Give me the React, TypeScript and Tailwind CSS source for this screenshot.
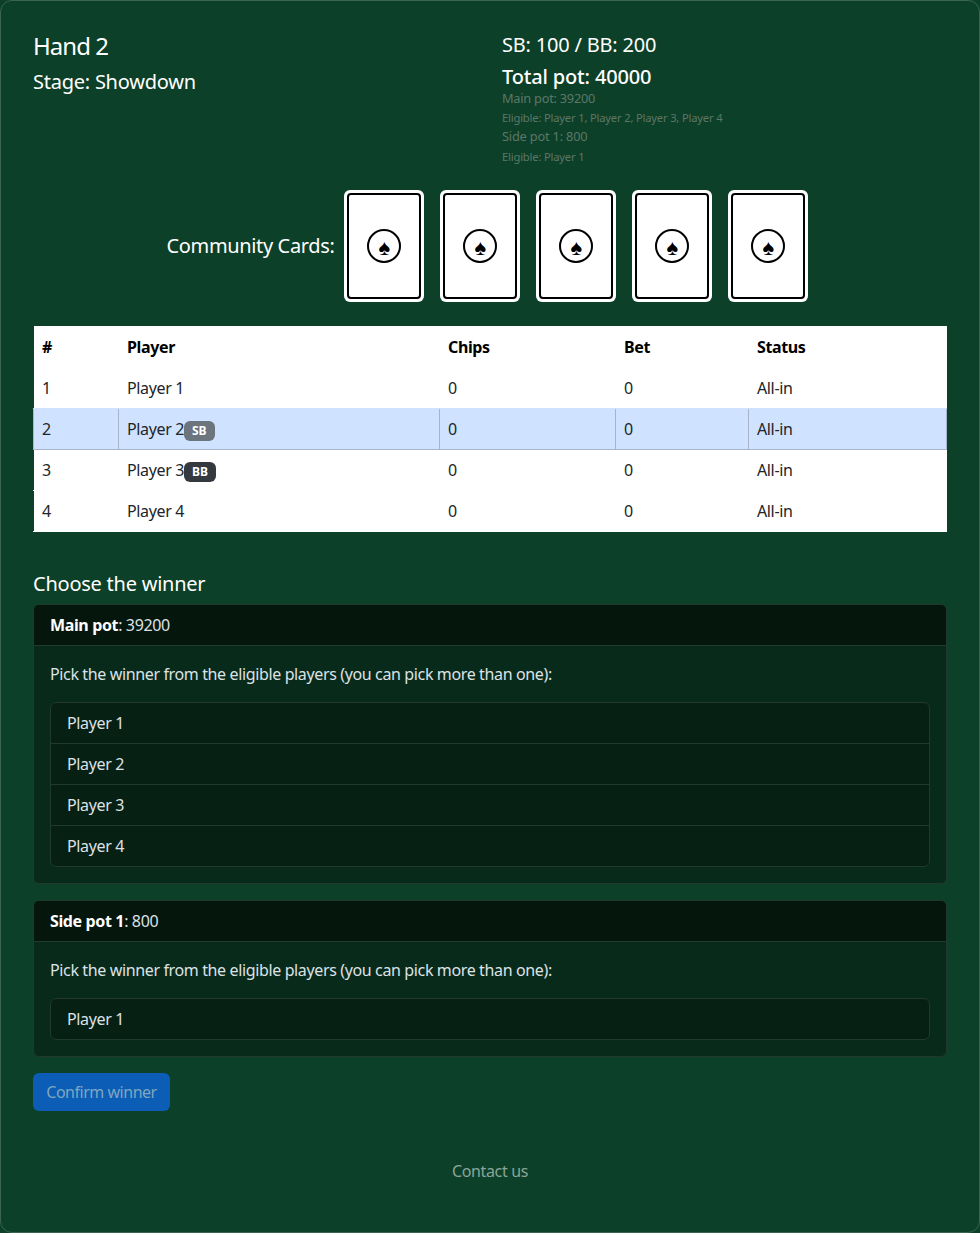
import React from "react";

function Card() {
  return (
    <div className="w-[80px] h-[112px] bg-white rounded-[6px] p-[3px] shrink-0">
      <div className="w-full h-full border-2 border-black rounded-[4px] flex items-center justify-center">
        <div className="w-[34px] h-[34px] rounded-full border-2 border-black flex items-center justify-center text-black text-[22px] leading-none tracking-normal">♠</div>
      </div>
    </div>
  );
}

function Row({ n, name, badge, active, beforeActive }: { n: number; name: string; badge?: string; active?: boolean; beforeActive?: boolean }) {
  const plain = beforeActive
    ? "h-[41px] px-2 border-y border-l border-white border-b-[#cfe2ff]"
    : "h-[41px] px-2 border-y border-l border-white";
  const td = active ? "h-[41px] px-2 bg-[#cfe2ff] border-y border-l border-[#a6b5cc]" : plain;
  return (
    <tr className="text-[#212529]">
      <td className={active ? td : plain + " border-l-[#0d4028]"}>{n}</td>
      <td className={td}>
        <span className="inline-flex items-center">
          {name}
          {badge === "SB" && <span className="mt-[4px] bg-[#6c757d] text-white text-[12px] font-bold leading-none tracking-normal px-[8px] py-[4px] rounded-[6px]">SB</span>}
          {badge === "BB" && <span className="mt-[4px] bg-[#343a40] text-white text-[12px] font-bold leading-none tracking-normal px-[8px] py-[4px] rounded-[6px]">BB</span>}
        </span>
      </td>
      <td className={td}>0</td>
      <td className={td}>0</td>
      <td className={active ? td + " border-r" : td}>All-in</td>
    </tr>
  );
}

function PotCard({ title, amount, players }: { title: string; amount: number; players: string[] }) {
  return (
    <div className="border border-[#21392e] rounded-[6px] bg-[#082a1a] overflow-hidden">
      <div className="h-[41px] px-4 flex items-center bg-[#05160d] border-b border-[#21392e] text-[#dee2e6]">
        <span><b className="font-bold text-white">{title}</b>: {amount}</span>
      </div>
      <div className="p-4">
        <p className="mb-4 leading-6 text-[#dee2e6]">Pick the winner from the eligible players (you can pick more than one):</p>
        <div className="border border-[#21392e] rounded-[6px] bg-[#072014] overflow-hidden">
          {players.map((p, i) => (
            <div key={p} className={"px-4 flex items-center text-[#dee2e6] " + (i > 0 ? "h-[41px] border-t border-[#21392e]" : "h-[40px]")}>{p}</div>
          ))}
        </div>
      </div>
    </div>
  );
}

export default function App() {
  return (
    <div className="bg-[#0d4028] w-[980px] h-[1233px]">
      <div className="w-[980px] h-[1233px] bg-[#0d4028] border border-[#3a6350] rounded-[12px] px-[32px] pt-[32px] text-[16px] tracking-[-0.023em] text-white font-['Noto_Sans',sans-serif]">
        <div className="flex">
          <div className="w-[469px]">
            <h2 className="text-[24px] leading-[25px] tracking-[-0.04em] font-normal mb-[12px]">Hand 2</h2>
            <h4 className="text-[20px] leading-[24px] tracking-[-0.012em] font-normal">Stage: Showdown</h4>
          </div>
          <div>
            <div className="text-[20px] leading-[24px] tracking-[-0.01em] mb-2">SB: 100 / BB: 200</div>
            <div className="text-[20px] leading-[24px] tracking-[-0.008em] font-medium">Total pot: 40000</div>
            <div className="text-[#5c7768]">
              <div className="text-[12.8px] leading-[19px] tracking-[-0.02em]">Main pot: 39200</div>
              <div className="text-[11.2px] leading-[19px] tracking-[-0.016em]">Eligible: Player 1, Player 2, Player 3, Player 4</div>
              <div className="text-[12.8px] leading-[19px] tracking-[-0.015em]">Side pot 1: 800</div>
              <div className="text-[11.2px] leading-[21px] tracking-[-0.016em]">Eligible: Player 1</div>
            </div>
          </div>
        </div>

        <div className="flex items-center justify-center gap-[16px] mt-[23px] mb-[24px] ml-[-5px]">
          <div className="text-[20px] tracking-[-0.018em] mr-[-6px]">Community Cards:</div>
          <Card /><Card /><Card /><Card /><Card />
        </div>

        <table className="w-[914px] table-fixed text-[#212529] border-collapse bg-white">
          <colgroup>
            <col className="w-[85px]" /><col className="w-[321px]" /><col className="w-[176px]" /><col className="w-[133px]" /><col />
          </colgroup>
          <thead>
            <tr className="font-bold text-left text-black">
              <th className="h-[41px] px-2 pt-[2px] border-l border-[#0d4028]">#</th>
              <th className="px-2 pt-[2px] border-l border-white">Player</th>
              <th className="px-2 pt-[2px] border-l border-white">Chips</th>
              <th className="px-2 pt-[2px] border-l border-white">Bet</th>
              <th className="px-2 pt-[2px] border-l border-white">Status</th>
            </tr>
          </thead>
          <tbody>
            <Row n={1} name="Player 1" beforeActive />
            <Row n={2} name="Player 2" badge="SB" active />
            <Row n={3} name="Player 3" badge="BB" />
            <Row n={4} name="Player 4" />
          </tbody>
        </table>

        <h4 className="text-[20px] leading-[24px] tracking-[-0.012em] font-normal mt-[40px] mb-[8px]">Choose the winner</h4>
        <div className="flex flex-col gap-4">
          <PotCard title="Main pot" amount={39200} players={["Player 1", "Player 2", "Player 3", "Player 4"]} />
          <PotCard title="Side pot 1" amount={800} players={["Player 1"]} />
        </div>
        <button className="mt-4 h-[38px] w-[137px] rounded-[6px] bg-[#0b5db5] text-[#7fa6bf] tracking-[-0.03em]">Confirm winner</button>
        <div className="mt-[48px] text-center text-[#8aa598]">Contact us</div>
      </div>
    </div>
  );
}
